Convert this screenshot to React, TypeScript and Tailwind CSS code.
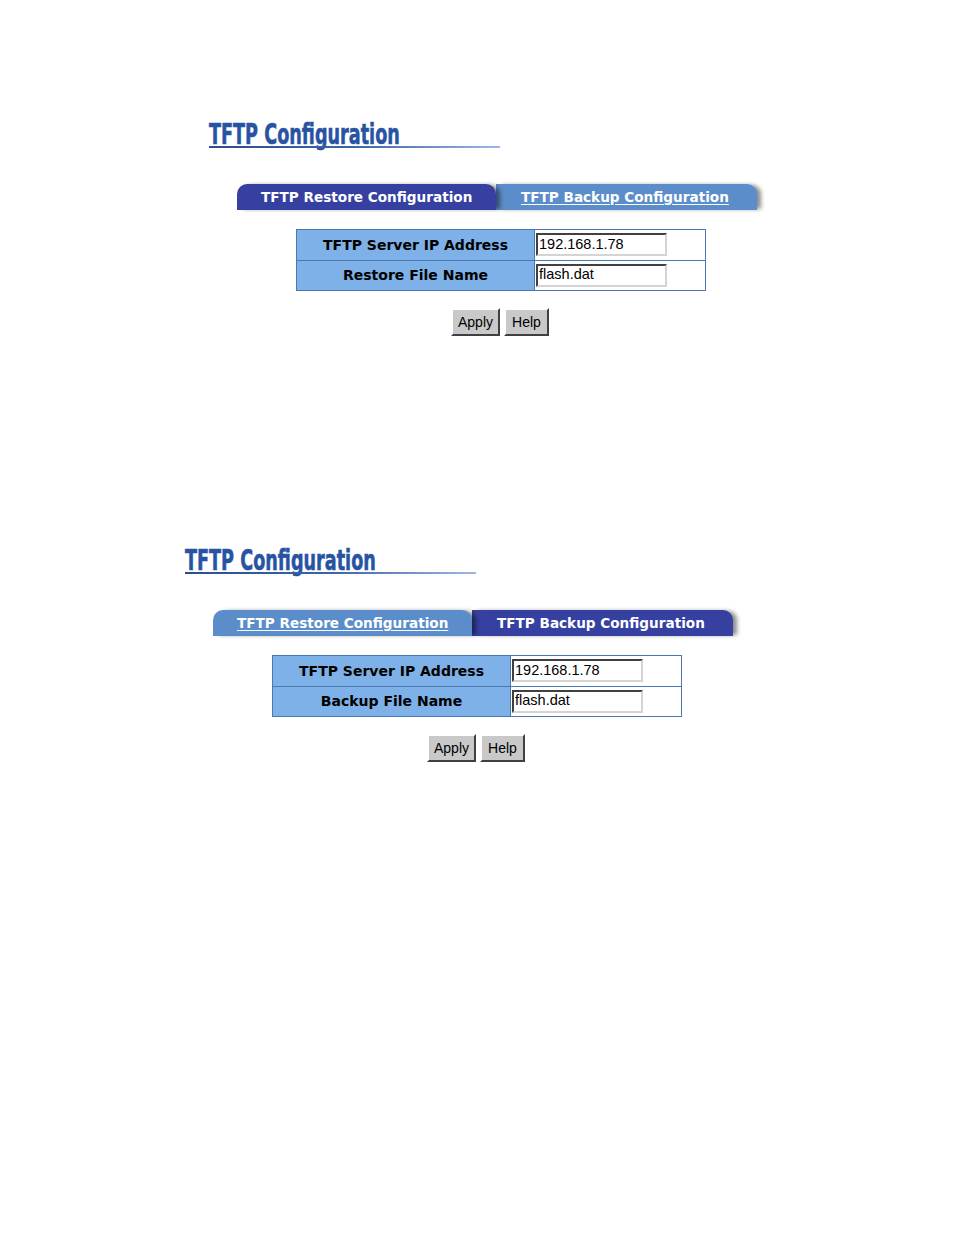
import React from 'react';

interface BlockProps {
  fileLabel: string;
  active: 'restore' | 'backup';
  className: string;
}

function Tab({ label, active, first }: { label: string; active: boolean; first?: boolean }) {
  return (
    <div
      className={`relative flex items-center h-[26px] rounded-tr-[10px] shadow-[5px_0_4px_-1px_rgba(0,0,0,0.45)] ${
        first ? 'z-10 w-[259px] rounded-tl-[10px] pl-[24px]' : 'z-0 w-[261px] pl-[25px]'
      } ${active ? 'bg-[#3540a0]' : 'bg-[#5b8dcb]'}`}
    >
      <span
        className={`text-white font-bold text-[13.6px] whitespace-nowrap ${active ? '' : 'underline underline-offset-2'}`}
        style={{ fontFamily: '"DejaVu Sans", Verdana, sans-serif' }}
      >
        {label}
      </span>
    </div>
  );
}

function Field({ label, value }: { label: string; value: string }) {
  return (
    <tr className="h-[30.5px]">
      <td
        className="w-[238px] bg-[#7db1e7] border border-[#4a78b0] text-center font-bold text-[14px] text-black pt-[1px]"
        style={{ fontFamily: '"DejaVu Sans", Verdana, sans-serif' }}
      >
        {label}
      </td>
      <td className="border border-[#4a78b0] bg-white pl-[1px] align-middle">
        <div
          className="w-[131px] h-[23px] border-2 border-t-[#404040] border-l-[#404040] border-b-[#d4d4d4] border-r-[#d4d4d4] flex items-center pl-[1px] text-[14.5px] text-black"
          style={{ fontFamily: '"Liberation Sans", Arial, sans-serif' }}
        >
          {value}
        </div>
      </td>
    </tr>
  );
}

function Btn({ label, w }: { label: string; w: string }) {
  return (
    <button
      className={`${w} h-[28px] bg-[#c9c9c9] border-2 border-t-white border-l-white border-b-[#404040] border-r-[#404040] text-[14px] text-black`}
      style={{ fontFamily: '"Liberation Sans", Arial, sans-serif' }}
    >
      {label}
    </button>
  );
}

function Block({ fileLabel, active, className }: BlockProps) {
  return (
    <div className={`flex flex-col ${className}`}>
      <div className="w-[291px] h-[28px] relative">
        <span
          className="absolute left-0 top-[-6px] origin-left scale-x-[0.63] whitespace-nowrap text-[28px] font-bold text-[#2853a3]"
          style={{ fontFamily: '"DejaVu Sans", sans-serif', WebkitTextStroke: '0.6px #2853a3' }}
        >
          TFTP Configuration
        </span>
        <div className="absolute left-0 bottom-0 w-full h-[2px] bg-gradient-to-r from-[#2c4f8c] via-[#3c64a8] to-[#9db8e0]" />
      </div>
      <div className="flex ml-[28px] mt-[36px]">
        <Tab label="TFTP Restore Configuration" active={active === 'restore'} first />
        <Tab label="TFTP Backup Configuration" active={active === 'backup'} />
      </div>
      <table className="ml-[87px] mt-[19px] w-[410px] border-collapse border border-[#4a78b0]">
        <tbody>
          <Field label="TFTP Server IP Address" value="192.168.1.78" />
          <Field label={fileLabel} value="flash.dat" />
        </tbody>
      </table>
      <div className="flex gap-[4px] ml-[242px] mt-[17px]">
        <Btn label="Apply" w="w-[49px]" />
        <Btn label="Help" w="w-[45px]" />
      </div>
    </div>
  );
}

export default function App() {
  return (
    <div className="w-[954px] h-[1235px] bg-white">
      <div className="pt-[120px]">
        <Block fileLabel="Restore File Name" active="restore" className="ml-[209px]" />
      </div>
      <div className="pt-[210px]">
        <Block fileLabel="Backup File Name" active="backup" className="ml-[185px]" />
      </div>
    </div>
  );
}
